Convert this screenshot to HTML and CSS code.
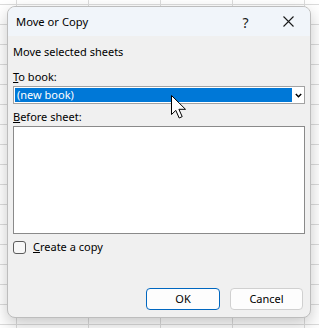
FILE: index.html
```html
<!DOCTYPE html>
<html>
<head>
<meta charset="utf-8">
<link rel="stylesheet" href="styles.css">
</head>
<body>
<div class="dialog">
  <div class="titlebar">
    <span class="title">Move or Copy</span>
    <span class="tbtn help">?</span>
    <span class="tbtn close">
      <svg width="11" height="11" viewBox="0 0 11 11"><path d="M0.5 0.5 L10.5 10.5 M10.5 0.5 L0.5 10.5" stroke="#1a1a1a" stroke-width="1.1" fill="none"/></svg>
    </span>
  </div>
  <div class="body">
    <div class="line first">Move selected sheets</div>
    <div class="line label"><u>T</u>o book:</div>
    <div class="select">
      <div class="sel-value">(new book)</div>
      <div class="sel-arrow">
        <svg width="7" height="5" viewBox="0 0 7 5"><path d="M0.8 1 L3.5 3.7 L6.2 1" stroke="#000" stroke-width="1.5" fill="none"/></svg>
      </div>
    </div>
    <div class="line label2"><u>B</u>efore sheet:</div>
    <div class="listbox"></div>
    <div class="checkrow">
      <span class="checkbox"></span>
      <span><u>C</u>reate a copy</span>
    </div>
    <div class="buttons">
      <div class="btn default">OK</div>
      <div class="btn">Cancel</div>
    </div>
  </div>
</div>
<svg class="cursor" width="18" height="25" viewBox="0 0 18 25">
  <path d="M0.5 0.5 V19.5 L4.8 15.4 L8.2 23 L11.2 21.6 L7.9 14.3 H14.5 Z" fill="#fff" stroke="#000" stroke-width="1" stroke-linejoin="miter"/>
</svg>
</body>
</html>
```
FILE: styles.css
```css
html, body {
  margin: 0;
  padding: 0;
}
body {
  width: 319px;
  height: 328px;
  overflow: hidden;
  position: relative;
  background-color: #ffffff;
  background-image:
    linear-gradient(to right, #dcdcdc 1px, transparent 1px),
    linear-gradient(to bottom, #dcdcdc 1px, transparent 1px);
  background-size: 72px 100%, 100% 20px;
  background-position: 16px 0, 0 4px;
  font-family: "Noto Sans", "Segoe UI", sans-serif;
  font-size: 11px;
  color: #000;
  display: flow-root;
}
.dialog {
  margin: 6px 0 0 7px;
  width: 304px;
  height: 312px;
  box-sizing: border-box;
  border: 1px solid #bdbdbd;
  border-radius: 8px;
  background: #f0f0f0;
  overflow: hidden;
  display: flex;
  flex-direction: column;
  box-shadow: 0 6px 16px rgba(0, 0, 0, 0.22);
}
.titlebar {
  height: 29px;
  flex: none;
  display: flex;
  align-items: center;
  background: #f1f5fa;
  padding-left: 8px;
}
.title {
  flex: 1;
  line-height: 16px;
  font-size: 11.2px;
}
.tbtn {
  width: 43px;
  height: 29px;
  display: flex;
  align-items: center;
  justify-content: center;
}
.help {
  font-size: 14px;
  color: #1a1a1a;
  padding-top: 1px;
  box-sizing: border-box;
}
.close svg {
  display: block;
}
.body {
  flex: 1;
  display: flex;
  flex-direction: column;
  padding: 0 7px 7px 5px;
}
.line {
  line-height: 16px;
  height: 16px;
}
.first {
  margin-top: 8px;
}
.label {
  margin-top: 9px;
}
.select {
  margin-top: 1px;
  height: 18px;
  box-sizing: border-box;
  border: 1px solid #a2a2a2;
  background: #fff;
  display: flex;
  padding: 1px;
  margin-right: -2px;
}
.sel-value {
  flex: 1;
  background: #0078d7;
  color: #fff;
  line-height: 14px;
  padding-left: 2px;
}
.sel-arrow {
  width: 10px;
  display: flex;
  align-items: center;
  justify-content: center;
  border-left: 1px solid #fff;
}
.sel-arrow svg {
  display: block;
}
.label2 {
  margin-top: 5px;
}
.listbox {
  margin-top: 1px;
  height: 108px;
  box-sizing: border-box;
  border: 1px solid #8a8a8a;
  background: #fff;
  margin-right: -2px;
}
.checkrow {
  margin-top: 5px;
  display: flex;
  align-items: center;
  line-height: 16px;
  height: 16px;
}
.checkbox {
  width: 13px;
  height: 13px;
  box-sizing: border-box;
  border: 1px solid #5c5c5c;
  border-radius: 3px;
  background: #f7f7f7;
  margin-right: 7px;
}
.buttons {
  margin-top: auto;
  display: flex;
  justify-content: flex-end;
  gap: 10px;
}
.btn {
  width: 73px;
  height: 22px;
  box-sizing: border-box;
  border: 1px solid #d0d0d0;
  border-radius: 4px;
  background: #fdfdfd;
  display: flex;
  align-items: center;
  justify-content: center;
  line-height: 16px;
}
.btn.default {
  width: 74px;
  border-color: #0067c0;
}
.cursor {
  position: absolute;
  left: 171px;
  top: 95px;
}
```
